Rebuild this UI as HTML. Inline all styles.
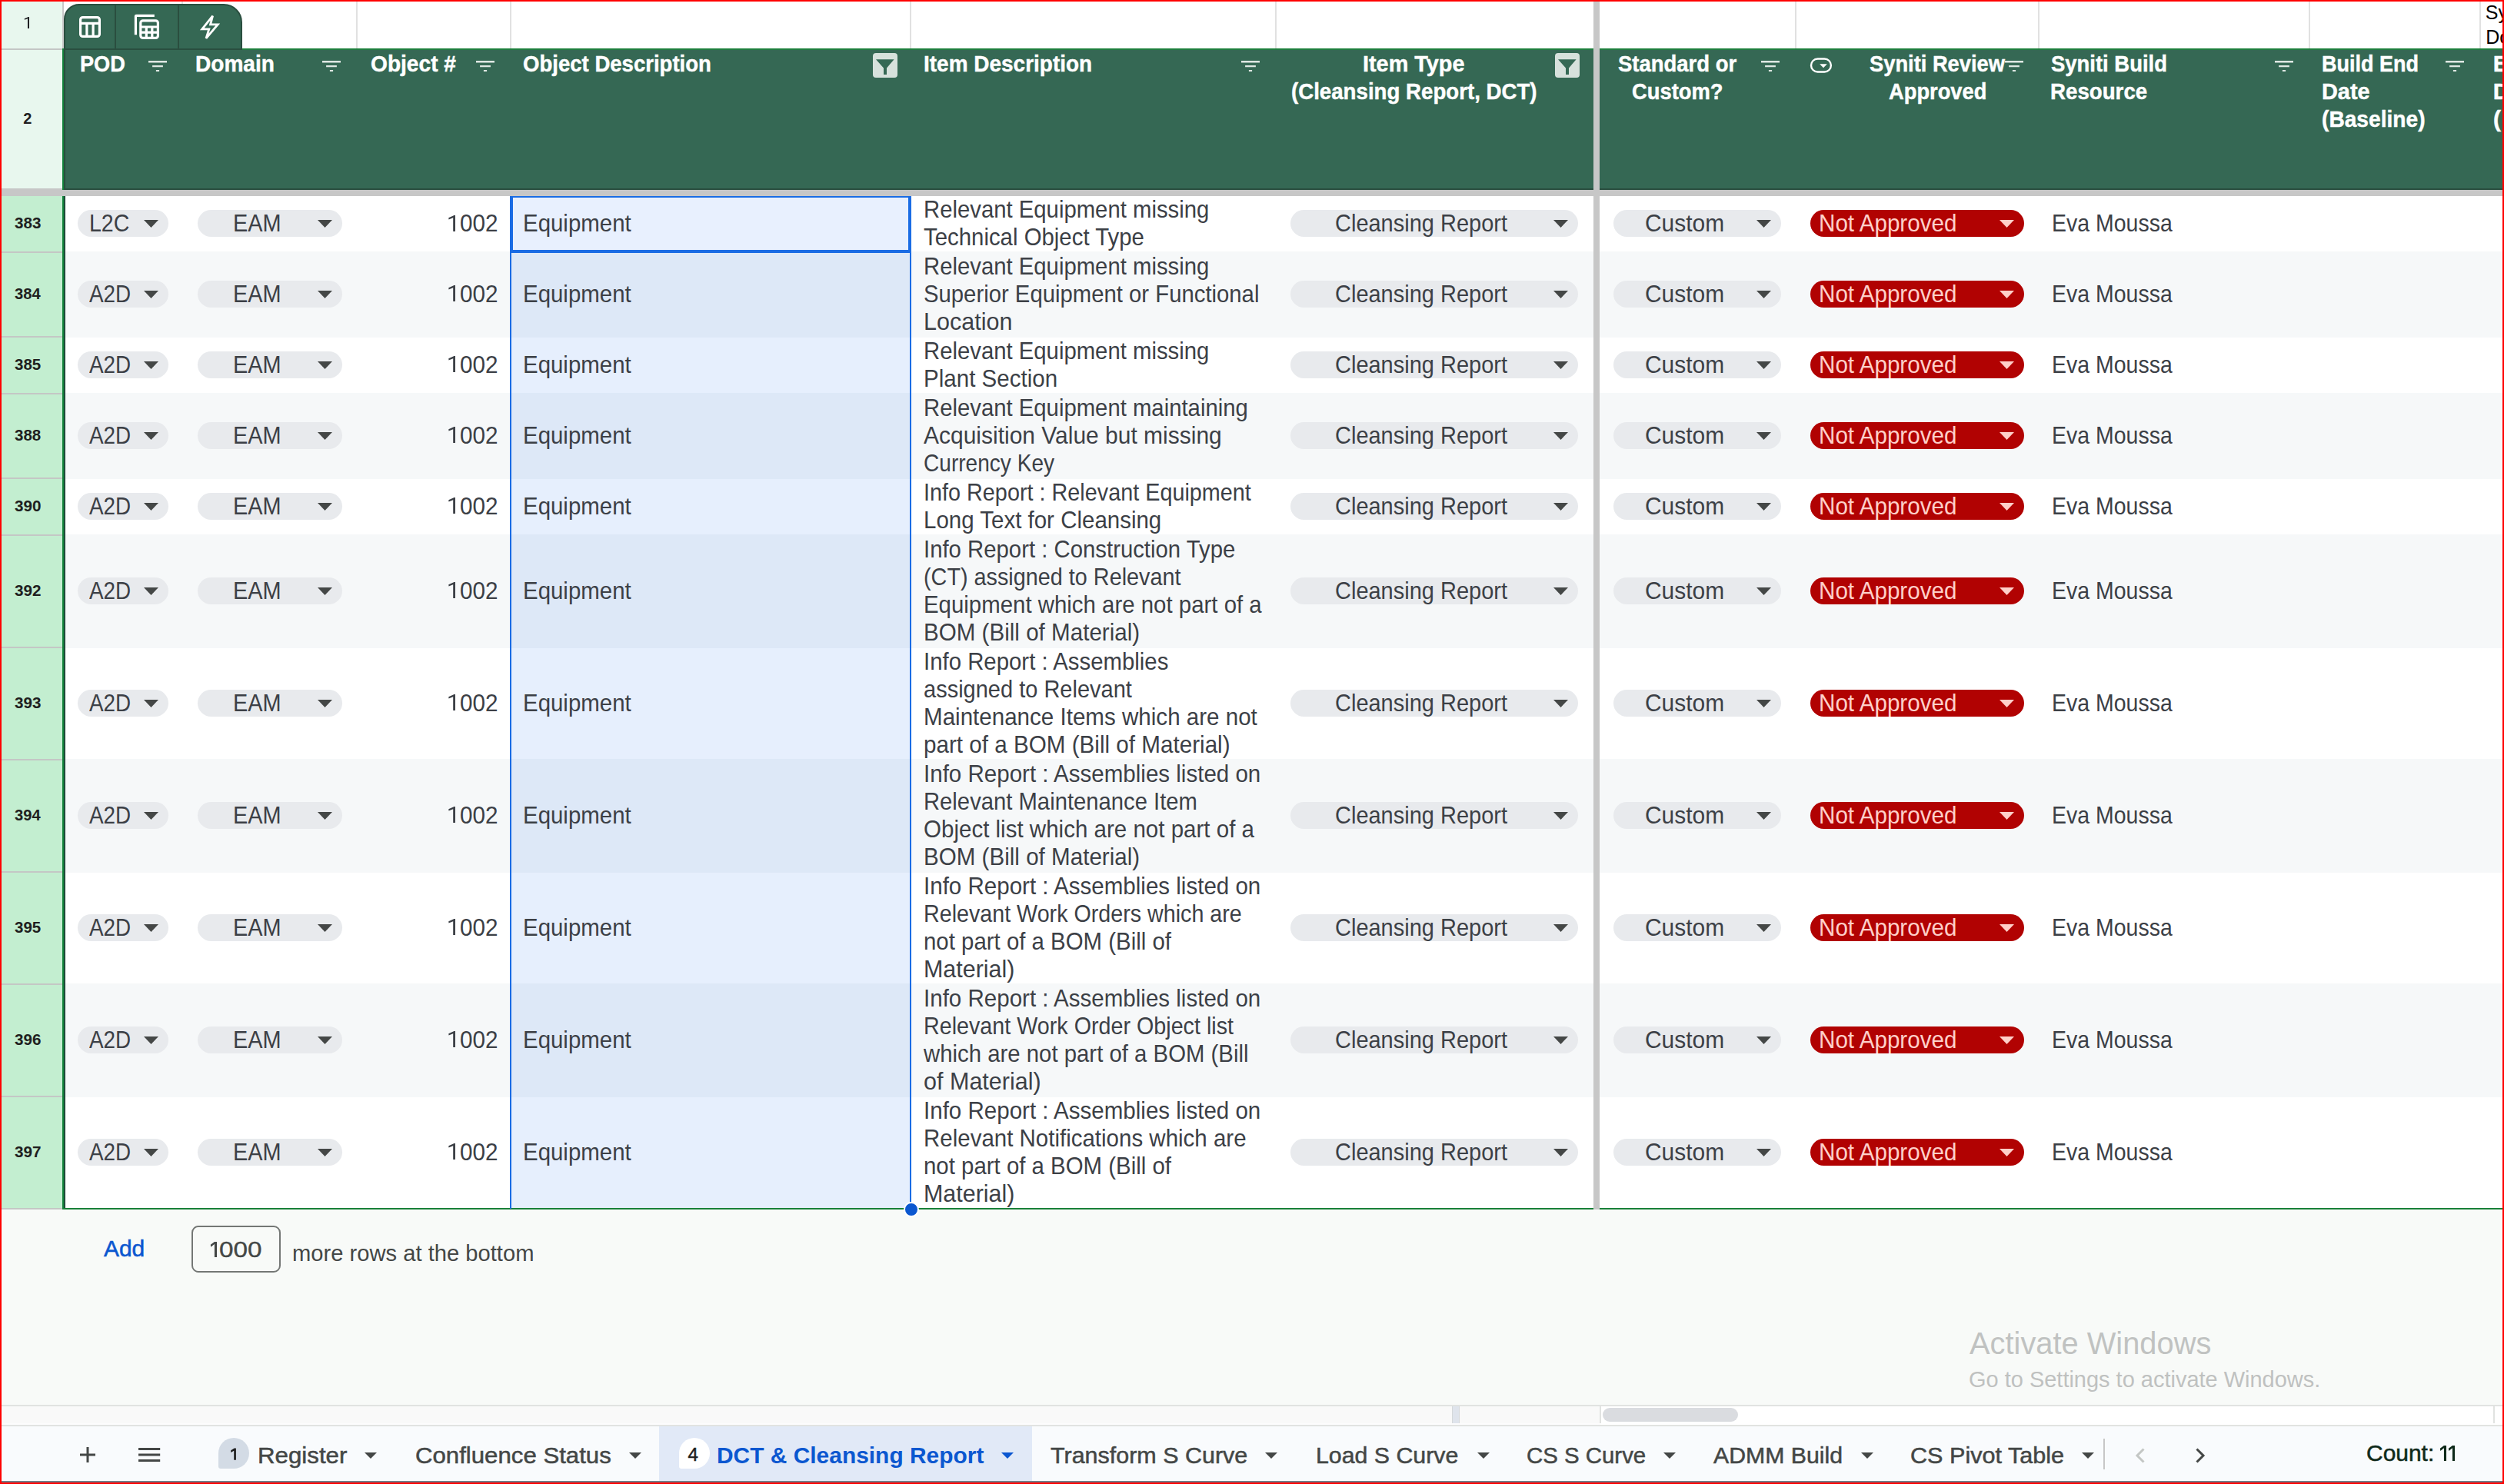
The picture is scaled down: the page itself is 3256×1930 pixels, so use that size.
<!DOCTYPE html>
<html><head><meta charset="utf-8"><title>DCT &amp; Cleansing Report</title><style>
html,body{margin:0;padding:0;}
html{width:3256px;height:1930px;overflow:hidden;}
body{width:3256px;height:1930px;position:relative;overflow:hidden;background:#fff;font-family:"Liberation Sans", sans-serif;}
body>div,body>span,body>svg{position:absolute;}
body>span{white-space:pre;}
</style></head>
<body>
<div style="left:2px;top:2px;width:79px;height:62px;background:#e8f7ee;"></div>
<div style="left:81px;top:2px;width:2px;height:62px;background:#c8c8c8;"></div>
<div style="left:2px;top:63px;width:79px;height:2px;background:#c4c7c5;"></div>
<div style="left:236px;top:2px;width:2px;height:61px;background:#e1e1e1;"></div>
<div style="left:463px;top:2px;width:2px;height:61px;background:#e1e1e1;"></div>
<div style="left:663px;top:2px;width:2px;height:61px;background:#e1e1e1;"></div>
<div style="left:1183px;top:2px;width:2px;height:61px;background:#e1e1e1;"></div>
<div style="left:1658px;top:2px;width:2px;height:61px;background:#e1e1e1;"></div>
<div style="left:2334px;top:2px;width:2px;height:61px;background:#e1e1e1;"></div>
<div style="left:2650px;top:2px;width:2px;height:61px;background:#e1e1e1;"></div>
<div style="left:3002px;top:2px;width:2px;height:61px;background:#e1e1e1;"></div>
<div style="left:3224px;top:2px;width:2px;height:61px;background:#e1e1e1;"></div>
<div style="left:2px;top:65px;width:79px;height:182px;background:#e8f7ee;"></div>
<div style="left:84px;top:63px;width:3172px;height:184px;background:#356854;"></div>
<div style="left:84px;top:63px;width:3172px;height:1px;background:#0e792e;"></div>
<div style="left:84px;top:64px;width:3172px;height:1px;background:#217c42;"></div>
<div style="left:84px;top:245px;width:3172px;height:2px;background:#2a4e3f;"></div>
<div style="left:81px;top:63px;width:2px;height:184px;background:#12803a;"></div>
<div style="left:83px;top:65px;width:2px;height:182px;background:#2a4e3f;"></div>
<div style="left:83px;top:5px;width:232px;height:60px;background:#356854;border:2px solid #2a4e3f;box-sizing:border-box;border-radius:20px 24px 0 0;"></div>
<div style="left:149px;top:7px;width:2px;height:56px;background:#2a4e3f;"></div>
<div style="left:231px;top:7px;width:2px;height:56px;background:#2a4e3f;"></div>
<svg style="left:100px;top:16px" width="200" height="40" viewBox="0 0 200 40" fill="none" stroke="#fff" stroke-width="3.2">
<rect x="4.6" y="6.6" width="24.8" height="24.8" rx="3"/>
<path d="M4.6 14.3H29.4M12.9 14.3V31.4M21.1 14.3V31.4"/>
<path d="M100.8 4.4H77.0a0.6 0.6 0 0 0-0.6 0.6V29.3"/>
<rect x="82.8" y="10.8" width="22.6" height="22.6" rx="3"/>
<path d="M82.8 19.0H105.4M82.8 26.2H105.4M90.3 19.0V33.4M97.8 19.0V33.4"/>
<path d="M176.6 4.6L162.8 21.8H171.8L168.0 33.8L183.2 15.8H173.6Z" stroke-width="2.8" stroke-linejoin="miter"/>
</svg>
<svg style="left:193px;top:79px" width="24" height="15" viewBox="0 0 24 15"><path d="M0 0H24V2.4H0ZM5.1 6H18.9V8.2H5.1ZM9.9 12H14.1V14H9.9Z" fill="#dfe8e3"/></svg>
<svg style="left:419px;top:79px" width="24" height="15" viewBox="0 0 24 15"><path d="M0 0H24V2.4H0ZM5.1 6H18.9V8.2H5.1ZM9.9 12H14.1V14H9.9Z" fill="#dfe8e3"/></svg>
<svg style="left:619px;top:79px" width="24" height="15" viewBox="0 0 24 15"><path d="M0 0H24V2.4H0ZM5.1 6H18.9V8.2H5.1ZM9.9 12H14.1V14H9.9Z" fill="#dfe8e3"/></svg>
<div style="left:1135px;top:69px;width:32px;height:32px;border-radius:4px;background:#d7e1dc;"></div>
<svg style="left:1135px;top:69px" width="32" height="32" viewBox="0 0 32 32"><path d="M4 8.2H27.6L18 19.5V28H14V19.5Z" fill="#356854"/></svg>
<svg style="left:1613.5px;top:79px" width="24" height="15" viewBox="0 0 24 15"><path d="M0 0H24V2.4H0ZM5.1 6H18.9V8.2H5.1ZM9.9 12H14.1V14H9.9Z" fill="#dfe8e3"/></svg>
<div style="left:2022px;top:69px;width:32px;height:32px;border-radius:4px;background:#d7e1dc;"></div>
<svg style="left:2022px;top:69px" width="32" height="32" viewBox="0 0 32 32"><path d="M4 8.2H27.6L18 19.5V28H14V19.5Z" fill="#356854"/></svg>
<svg style="left:2290px;top:79px" width="24" height="15" viewBox="0 0 24 15"><path d="M0 0H24V2.4H0ZM5.1 6H18.9V8.2H5.1ZM9.9 12H14.1V14H9.9Z" fill="#dfe8e3"/></svg>
<svg style="left:2353px;top:74px" width="32" height="22" viewBox="0 0 32 22"><rect x="2" y="2.5" width="25.9" height="17" rx="8.5" fill="none" stroke="#fff" stroke-width="2.4"/><path d="M13.2 9.2H22.8L18 14.3Z" fill="#fff"/></svg>
<svg style="left:2606.6px;top:79px" width="24" height="15" viewBox="0 0 24 15"><path d="M0 0H24V2.4H0ZM5.1 6H18.9V8.2H5.1ZM9.9 12H14.1V14H9.9Z" fill="#dfe8e3"/></svg>
<svg style="left:2958.4px;top:79px" width="24" height="15" viewBox="0 0 24 15"><path d="M0 0H24V2.4H0ZM5.1 6H18.9V8.2H5.1ZM9.9 12H14.1V14H9.9Z" fill="#dfe8e3"/></svg>
<svg style="left:3180px;top:79px" width="24" height="15" viewBox="0 0 24 15"><path d="M0 0H24V2.4H0ZM5.1 6H18.9V8.2H5.1ZM9.9 12H14.1V14H9.9Z" fill="#dfe8e3"/></svg>
<svg style="left:26.00px;top:12.90px" width="14" height="26" viewBox="0 0 14 26"><path d="M9.98 24.00L9.98 11.26L5.88 12.77L5.74 11.18L10.92 8.95L12.00 8.95L12.00 24.00Z" fill="#202124"/></svg>
<div style="left:2px;top:247px;width:3254px;height:8px;background:#c7c7c7;"></div>
<div style="left:2px;top:245px;width:79px;height:2px;background:#c7c7c7;"></div>
<div style="left:2px;top:255px;width:79px;height:73px;background:#c3eed0;"></div>
<div style="left:664px;top:256px;width:520px;height:71px;background:#e8f0fe;"></div>
<div style="left:101px;top:273px;width:118px;height:35px;border-radius:17.5px;background:#e8eaed;"></div>
<svg style="left:187px;top:285.5px" width="19" height="10" viewBox="0 0 19 10"><path d="M0 0H19L9.5 10Z" fill="#444746"/></svg>
<div style="left:257px;top:273px;width:188px;height:35px;border-radius:17.5px;background:#e8eaed;"></div>
<svg style="left:413px;top:285.5px" width="19" height="10" viewBox="0 0 19 10"><path d="M0 0H19L9.5 10Z" fill="#444746"/></svg>
<svg style="left:579.50px;top:276.90px" width="14" height="26" viewBox="0 0 14 26"><path d="M9.20 24.00L9.20 6.30L3.50 8.40L3.30 6.20L10.50 3.10L12.00 3.10L12.00 24.00Z" fill="#3c4046"/></svg>
<div style="left:1678px;top:273px;width:374px;height:35px;border-radius:17.5px;background:#e8eaed;"></div>
<svg style="left:2020px;top:285.5px" width="19" height="10" viewBox="0 0 19 10"><path d="M0 0H19L9.5 10Z" fill="#444746"/></svg>
<div style="left:2098px;top:273px;width:218px;height:35px;border-radius:17.5px;background:#e8eaed;"></div>
<svg style="left:2284px;top:285.5px" width="19" height="10" viewBox="0 0 19 10"><path d="M0 0H19L9.5 10Z" fill="#444746"/></svg>
<div style="left:2354px;top:273px;width:278px;height:35px;border-radius:17.5px;background:#b10202;"></div>
<svg style="left:2600px;top:285.5px" width="19" height="10" viewBox="0 0 19 10"><path d="M0 0H19L9.5 10Z" fill="#ffcfc9"/></svg>
<div style="left:2px;top:328px;width:79px;height:110px;background:#c3eed0;"></div>
<div style="left:2px;top:327px;width:79px;height:2px;background:#c4c7c5;"></div>
<div style="left:85px;top:327px;width:1987px;height:112px;background:#f6f8f9;"></div>
<div style="left:2080px;top:327px;width:1176px;height:112px;background:#f6f8f9;"></div>
<div style="left:664px;top:327px;width:520px;height:112px;background:#dde8f7;"></div>
<div style="left:101px;top:365px;width:118px;height:35px;border-radius:17.5px;background:#e8eaed;"></div>
<svg style="left:187px;top:377.5px" width="19" height="10" viewBox="0 0 19 10"><path d="M0 0H19L9.5 10Z" fill="#444746"/></svg>
<div style="left:257px;top:365px;width:188px;height:35px;border-radius:17.5px;background:#e8eaed;"></div>
<svg style="left:413px;top:377.5px" width="19" height="10" viewBox="0 0 19 10"><path d="M0 0H19L9.5 10Z" fill="#444746"/></svg>
<svg style="left:579.50px;top:368.40px" width="14" height="26" viewBox="0 0 14 26"><path d="M9.20 24.00L9.20 6.30L3.50 8.40L3.30 6.20L10.50 3.10L12.00 3.10L12.00 24.00Z" fill="#3c4046"/></svg>
<div style="left:1678px;top:365px;width:374px;height:35px;border-radius:17.5px;background:#e8eaed;"></div>
<svg style="left:2020px;top:377.5px" width="19" height="10" viewBox="0 0 19 10"><path d="M0 0H19L9.5 10Z" fill="#444746"/></svg>
<div style="left:2098px;top:365px;width:218px;height:35px;border-radius:17.5px;background:#e8eaed;"></div>
<svg style="left:2284px;top:377.5px" width="19" height="10" viewBox="0 0 19 10"><path d="M0 0H19L9.5 10Z" fill="#444746"/></svg>
<div style="left:2354px;top:365px;width:278px;height:35px;border-radius:17.5px;background:#b10202;"></div>
<svg style="left:2600px;top:377.5px" width="19" height="10" viewBox="0 0 19 10"><path d="M0 0H19L9.5 10Z" fill="#ffcfc9"/></svg>
<div style="left:2px;top:438px;width:79px;height:74px;background:#c3eed0;"></div>
<div style="left:2px;top:437px;width:79px;height:2px;background:#c4c7c5;"></div>
<div style="left:664px;top:439px;width:520px;height:72px;background:#e6effd;"></div>
<div style="left:101px;top:457px;width:118px;height:35px;border-radius:17.5px;background:#e8eaed;"></div>
<svg style="left:187px;top:469.5px" width="19" height="10" viewBox="0 0 19 10"><path d="M0 0H19L9.5 10Z" fill="#444746"/></svg>
<div style="left:257px;top:457px;width:188px;height:35px;border-radius:17.5px;background:#e8eaed;"></div>
<svg style="left:413px;top:469.5px" width="19" height="10" viewBox="0 0 19 10"><path d="M0 0H19L9.5 10Z" fill="#444746"/></svg>
<svg style="left:579.50px;top:460.40px" width="14" height="26" viewBox="0 0 14 26"><path d="M9.20 24.00L9.20 6.30L3.50 8.40L3.30 6.20L10.50 3.10L12.00 3.10L12.00 24.00Z" fill="#3c4046"/></svg>
<div style="left:1678px;top:457px;width:374px;height:35px;border-radius:17.5px;background:#e8eaed;"></div>
<svg style="left:2020px;top:469.5px" width="19" height="10" viewBox="0 0 19 10"><path d="M0 0H19L9.5 10Z" fill="#444746"/></svg>
<div style="left:2098px;top:457px;width:218px;height:35px;border-radius:17.5px;background:#e8eaed;"></div>
<svg style="left:2284px;top:469.5px" width="19" height="10" viewBox="0 0 19 10"><path d="M0 0H19L9.5 10Z" fill="#444746"/></svg>
<div style="left:2354px;top:457px;width:278px;height:35px;border-radius:17.5px;background:#b10202;"></div>
<svg style="left:2600px;top:469.5px" width="19" height="10" viewBox="0 0 19 10"><path d="M0 0H19L9.5 10Z" fill="#ffcfc9"/></svg>
<div style="left:2px;top:512px;width:79px;height:110px;background:#c3eed0;"></div>
<div style="left:2px;top:511px;width:79px;height:2px;background:#c4c7c5;"></div>
<div style="left:85px;top:511px;width:1987px;height:112px;background:#f6f8f9;"></div>
<div style="left:2080px;top:511px;width:1176px;height:112px;background:#f6f8f9;"></div>
<div style="left:664px;top:511px;width:520px;height:112px;background:#dde8f7;"></div>
<div style="left:101px;top:549px;width:118px;height:35px;border-radius:17.5px;background:#e8eaed;"></div>
<svg style="left:187px;top:561.5px" width="19" height="10" viewBox="0 0 19 10"><path d="M0 0H19L9.5 10Z" fill="#444746"/></svg>
<div style="left:257px;top:549px;width:188px;height:35px;border-radius:17.5px;background:#e8eaed;"></div>
<svg style="left:413px;top:561.5px" width="19" height="10" viewBox="0 0 19 10"><path d="M0 0H19L9.5 10Z" fill="#444746"/></svg>
<svg style="left:579.50px;top:552.40px" width="14" height="26" viewBox="0 0 14 26"><path d="M9.20 24.00L9.20 6.30L3.50 8.40L3.30 6.20L10.50 3.10L12.00 3.10L12.00 24.00Z" fill="#3c4046"/></svg>
<div style="left:1678px;top:549px;width:374px;height:35px;border-radius:17.5px;background:#e8eaed;"></div>
<svg style="left:2020px;top:561.5px" width="19" height="10" viewBox="0 0 19 10"><path d="M0 0H19L9.5 10Z" fill="#444746"/></svg>
<div style="left:2098px;top:549px;width:218px;height:35px;border-radius:17.5px;background:#e8eaed;"></div>
<svg style="left:2284px;top:561.5px" width="19" height="10" viewBox="0 0 19 10"><path d="M0 0H19L9.5 10Z" fill="#444746"/></svg>
<div style="left:2354px;top:549px;width:278px;height:35px;border-radius:17.5px;background:#b10202;"></div>
<svg style="left:2600px;top:561.5px" width="19" height="10" viewBox="0 0 19 10"><path d="M0 0H19L9.5 10Z" fill="#ffcfc9"/></svg>
<div style="left:2px;top:622px;width:79px;height:74px;background:#c3eed0;"></div>
<div style="left:2px;top:621px;width:79px;height:2px;background:#c4c7c5;"></div>
<div style="left:664px;top:623px;width:520px;height:72px;background:#e6effd;"></div>
<div style="left:101px;top:641px;width:118px;height:35px;border-radius:17.5px;background:#e8eaed;"></div>
<svg style="left:187px;top:653.5px" width="19" height="10" viewBox="0 0 19 10"><path d="M0 0H19L9.5 10Z" fill="#444746"/></svg>
<div style="left:257px;top:641px;width:188px;height:35px;border-radius:17.5px;background:#e8eaed;"></div>
<svg style="left:413px;top:653.5px" width="19" height="10" viewBox="0 0 19 10"><path d="M0 0H19L9.5 10Z" fill="#444746"/></svg>
<svg style="left:579.50px;top:644.40px" width="14" height="26" viewBox="0 0 14 26"><path d="M9.20 24.00L9.20 6.30L3.50 8.40L3.30 6.20L10.50 3.10L12.00 3.10L12.00 24.00Z" fill="#3c4046"/></svg>
<div style="left:1678px;top:641px;width:374px;height:35px;border-radius:17.5px;background:#e8eaed;"></div>
<svg style="left:2020px;top:653.5px" width="19" height="10" viewBox="0 0 19 10"><path d="M0 0H19L9.5 10Z" fill="#444746"/></svg>
<div style="left:2098px;top:641px;width:218px;height:35px;border-radius:17.5px;background:#e8eaed;"></div>
<svg style="left:2284px;top:653.5px" width="19" height="10" viewBox="0 0 19 10"><path d="M0 0H19L9.5 10Z" fill="#444746"/></svg>
<div style="left:2354px;top:641px;width:278px;height:35px;border-radius:17.5px;background:#b10202;"></div>
<svg style="left:2600px;top:653.5px" width="19" height="10" viewBox="0 0 19 10"><path d="M0 0H19L9.5 10Z" fill="#ffcfc9"/></svg>
<div style="left:2px;top:696px;width:79px;height:146px;background:#c3eed0;"></div>
<div style="left:2px;top:695px;width:79px;height:2px;background:#c4c7c5;"></div>
<div style="left:85px;top:695px;width:1987px;height:148px;background:#f6f8f9;"></div>
<div style="left:2080px;top:695px;width:1176px;height:148px;background:#f6f8f9;"></div>
<div style="left:664px;top:695px;width:520px;height:148px;background:#dde8f7;"></div>
<div style="left:101px;top:751px;width:118px;height:35px;border-radius:17.5px;background:#e8eaed;"></div>
<svg style="left:187px;top:763.5px" width="19" height="10" viewBox="0 0 19 10"><path d="M0 0H19L9.5 10Z" fill="#444746"/></svg>
<div style="left:257px;top:751px;width:188px;height:35px;border-radius:17.5px;background:#e8eaed;"></div>
<svg style="left:413px;top:763.5px" width="19" height="10" viewBox="0 0 19 10"><path d="M0 0H19L9.5 10Z" fill="#444746"/></svg>
<svg style="left:579.50px;top:754.40px" width="14" height="26" viewBox="0 0 14 26"><path d="M9.20 24.00L9.20 6.30L3.50 8.40L3.30 6.20L10.50 3.10L12.00 3.10L12.00 24.00Z" fill="#3c4046"/></svg>
<div style="left:1678px;top:751px;width:374px;height:35px;border-radius:17.5px;background:#e8eaed;"></div>
<svg style="left:2020px;top:763.5px" width="19" height="10" viewBox="0 0 19 10"><path d="M0 0H19L9.5 10Z" fill="#444746"/></svg>
<div style="left:2098px;top:751px;width:218px;height:35px;border-radius:17.5px;background:#e8eaed;"></div>
<svg style="left:2284px;top:763.5px" width="19" height="10" viewBox="0 0 19 10"><path d="M0 0H19L9.5 10Z" fill="#444746"/></svg>
<div style="left:2354px;top:751px;width:278px;height:35px;border-radius:17.5px;background:#b10202;"></div>
<svg style="left:2600px;top:763.5px" width="19" height="10" viewBox="0 0 19 10"><path d="M0 0H19L9.5 10Z" fill="#ffcfc9"/></svg>
<div style="left:2px;top:842px;width:79px;height:146px;background:#c3eed0;"></div>
<div style="left:2px;top:841px;width:79px;height:2px;background:#c4c7c5;"></div>
<div style="left:664px;top:843px;width:520px;height:144px;background:#e6effd;"></div>
<div style="left:101px;top:897px;width:118px;height:35px;border-radius:17.5px;background:#e8eaed;"></div>
<svg style="left:187px;top:909.5px" width="19" height="10" viewBox="0 0 19 10"><path d="M0 0H19L9.5 10Z" fill="#444746"/></svg>
<div style="left:257px;top:897px;width:188px;height:35px;border-radius:17.5px;background:#e8eaed;"></div>
<svg style="left:413px;top:909.5px" width="19" height="10" viewBox="0 0 19 10"><path d="M0 0H19L9.5 10Z" fill="#444746"/></svg>
<svg style="left:579.50px;top:900.40px" width="14" height="26" viewBox="0 0 14 26"><path d="M9.20 24.00L9.20 6.30L3.50 8.40L3.30 6.20L10.50 3.10L12.00 3.10L12.00 24.00Z" fill="#3c4046"/></svg>
<div style="left:1678px;top:897px;width:374px;height:35px;border-radius:17.5px;background:#e8eaed;"></div>
<svg style="left:2020px;top:909.5px" width="19" height="10" viewBox="0 0 19 10"><path d="M0 0H19L9.5 10Z" fill="#444746"/></svg>
<div style="left:2098px;top:897px;width:218px;height:35px;border-radius:17.5px;background:#e8eaed;"></div>
<svg style="left:2284px;top:909.5px" width="19" height="10" viewBox="0 0 19 10"><path d="M0 0H19L9.5 10Z" fill="#444746"/></svg>
<div style="left:2354px;top:897px;width:278px;height:35px;border-radius:17.5px;background:#b10202;"></div>
<svg style="left:2600px;top:909.5px" width="19" height="10" viewBox="0 0 19 10"><path d="M0 0H19L9.5 10Z" fill="#ffcfc9"/></svg>
<div style="left:2px;top:988px;width:79px;height:146px;background:#c3eed0;"></div>
<div style="left:2px;top:987px;width:79px;height:2px;background:#c4c7c5;"></div>
<div style="left:85px;top:987px;width:1987px;height:148px;background:#f6f8f9;"></div>
<div style="left:2080px;top:987px;width:1176px;height:148px;background:#f6f8f9;"></div>
<div style="left:664px;top:987px;width:520px;height:148px;background:#dde8f7;"></div>
<div style="left:101px;top:1043px;width:118px;height:35px;border-radius:17.5px;background:#e8eaed;"></div>
<svg style="left:187px;top:1055.5px" width="19" height="10" viewBox="0 0 19 10"><path d="M0 0H19L9.5 10Z" fill="#444746"/></svg>
<div style="left:257px;top:1043px;width:188px;height:35px;border-radius:17.5px;background:#e8eaed;"></div>
<svg style="left:413px;top:1055.5px" width="19" height="10" viewBox="0 0 19 10"><path d="M0 0H19L9.5 10Z" fill="#444746"/></svg>
<svg style="left:579.50px;top:1046.40px" width="14" height="26" viewBox="0 0 14 26"><path d="M9.20 24.00L9.20 6.30L3.50 8.40L3.30 6.20L10.50 3.10L12.00 3.10L12.00 24.00Z" fill="#3c4046"/></svg>
<div style="left:1678px;top:1043px;width:374px;height:35px;border-radius:17.5px;background:#e8eaed;"></div>
<svg style="left:2020px;top:1055.5px" width="19" height="10" viewBox="0 0 19 10"><path d="M0 0H19L9.5 10Z" fill="#444746"/></svg>
<div style="left:2098px;top:1043px;width:218px;height:35px;border-radius:17.5px;background:#e8eaed;"></div>
<svg style="left:2284px;top:1055.5px" width="19" height="10" viewBox="0 0 19 10"><path d="M0 0H19L9.5 10Z" fill="#444746"/></svg>
<div style="left:2354px;top:1043px;width:278px;height:35px;border-radius:17.5px;background:#b10202;"></div>
<svg style="left:2600px;top:1055.5px" width="19" height="10" viewBox="0 0 19 10"><path d="M0 0H19L9.5 10Z" fill="#ffcfc9"/></svg>
<div style="left:2px;top:1134px;width:79px;height:146px;background:#c3eed0;"></div>
<div style="left:2px;top:1133px;width:79px;height:2px;background:#c4c7c5;"></div>
<div style="left:664px;top:1135px;width:520px;height:144px;background:#e6effd;"></div>
<div style="left:101px;top:1189px;width:118px;height:35px;border-radius:17.5px;background:#e8eaed;"></div>
<svg style="left:187px;top:1201.5px" width="19" height="10" viewBox="0 0 19 10"><path d="M0 0H19L9.5 10Z" fill="#444746"/></svg>
<div style="left:257px;top:1189px;width:188px;height:35px;border-radius:17.5px;background:#e8eaed;"></div>
<svg style="left:413px;top:1201.5px" width="19" height="10" viewBox="0 0 19 10"><path d="M0 0H19L9.5 10Z" fill="#444746"/></svg>
<svg style="left:579.50px;top:1192.40px" width="14" height="26" viewBox="0 0 14 26"><path d="M9.20 24.00L9.20 6.30L3.50 8.40L3.30 6.20L10.50 3.10L12.00 3.10L12.00 24.00Z" fill="#3c4046"/></svg>
<div style="left:1678px;top:1189px;width:374px;height:35px;border-radius:17.5px;background:#e8eaed;"></div>
<svg style="left:2020px;top:1201.5px" width="19" height="10" viewBox="0 0 19 10"><path d="M0 0H19L9.5 10Z" fill="#444746"/></svg>
<div style="left:2098px;top:1189px;width:218px;height:35px;border-radius:17.5px;background:#e8eaed;"></div>
<svg style="left:2284px;top:1201.5px" width="19" height="10" viewBox="0 0 19 10"><path d="M0 0H19L9.5 10Z" fill="#444746"/></svg>
<div style="left:2354px;top:1189px;width:278px;height:35px;border-radius:17.5px;background:#b10202;"></div>
<svg style="left:2600px;top:1201.5px" width="19" height="10" viewBox="0 0 19 10"><path d="M0 0H19L9.5 10Z" fill="#ffcfc9"/></svg>
<div style="left:2px;top:1280px;width:79px;height:146px;background:#c3eed0;"></div>
<div style="left:2px;top:1279px;width:79px;height:2px;background:#c4c7c5;"></div>
<div style="left:85px;top:1279px;width:1987px;height:148px;background:#f6f8f9;"></div>
<div style="left:2080px;top:1279px;width:1176px;height:148px;background:#f6f8f9;"></div>
<div style="left:664px;top:1279px;width:520px;height:148px;background:#dde8f7;"></div>
<div style="left:101px;top:1335px;width:118px;height:35px;border-radius:17.5px;background:#e8eaed;"></div>
<svg style="left:187px;top:1347.5px" width="19" height="10" viewBox="0 0 19 10"><path d="M0 0H19L9.5 10Z" fill="#444746"/></svg>
<div style="left:257px;top:1335px;width:188px;height:35px;border-radius:17.5px;background:#e8eaed;"></div>
<svg style="left:413px;top:1347.5px" width="19" height="10" viewBox="0 0 19 10"><path d="M0 0H19L9.5 10Z" fill="#444746"/></svg>
<svg style="left:579.50px;top:1338.40px" width="14" height="26" viewBox="0 0 14 26"><path d="M9.20 24.00L9.20 6.30L3.50 8.40L3.30 6.20L10.50 3.10L12.00 3.10L12.00 24.00Z" fill="#3c4046"/></svg>
<div style="left:1678px;top:1335px;width:374px;height:35px;border-radius:17.5px;background:#e8eaed;"></div>
<svg style="left:2020px;top:1347.5px" width="19" height="10" viewBox="0 0 19 10"><path d="M0 0H19L9.5 10Z" fill="#444746"/></svg>
<div style="left:2098px;top:1335px;width:218px;height:35px;border-radius:17.5px;background:#e8eaed;"></div>
<svg style="left:2284px;top:1347.5px" width="19" height="10" viewBox="0 0 19 10"><path d="M0 0H19L9.5 10Z" fill="#444746"/></svg>
<div style="left:2354px;top:1335px;width:278px;height:35px;border-radius:17.5px;background:#b10202;"></div>
<svg style="left:2600px;top:1347.5px" width="19" height="10" viewBox="0 0 19 10"><path d="M0 0H19L9.5 10Z" fill="#ffcfc9"/></svg>
<div style="left:2px;top:1426px;width:79px;height:146px;background:#c3eed0;"></div>
<div style="left:2px;top:1425px;width:79px;height:2px;background:#c4c7c5;"></div>
<div style="left:664px;top:1427px;width:520px;height:144px;background:#e6effd;"></div>
<div style="left:101px;top:1481px;width:118px;height:35px;border-radius:17.5px;background:#e8eaed;"></div>
<svg style="left:187px;top:1493.5px" width="19" height="10" viewBox="0 0 19 10"><path d="M0 0H19L9.5 10Z" fill="#444746"/></svg>
<div style="left:257px;top:1481px;width:188px;height:35px;border-radius:17.5px;background:#e8eaed;"></div>
<svg style="left:413px;top:1493.5px" width="19" height="10" viewBox="0 0 19 10"><path d="M0 0H19L9.5 10Z" fill="#444746"/></svg>
<svg style="left:579.50px;top:1484.40px" width="14" height="26" viewBox="0 0 14 26"><path d="M9.20 24.00L9.20 6.30L3.50 8.40L3.30 6.20L10.50 3.10L12.00 3.10L12.00 24.00Z" fill="#3c4046"/></svg>
<div style="left:1678px;top:1481px;width:374px;height:35px;border-radius:17.5px;background:#e8eaed;"></div>
<svg style="left:2020px;top:1493.5px" width="19" height="10" viewBox="0 0 19 10"><path d="M0 0H19L9.5 10Z" fill="#444746"/></svg>
<div style="left:2098px;top:1481px;width:218px;height:35px;border-radius:17.5px;background:#e8eaed;"></div>
<svg style="left:2284px;top:1493.5px" width="19" height="10" viewBox="0 0 19 10"><path d="M0 0H19L9.5 10Z" fill="#444746"/></svg>
<div style="left:2354px;top:1481px;width:278px;height:35px;border-radius:17.5px;background:#b10202;"></div>
<svg style="left:2600px;top:1493.5px" width="19" height="10" viewBox="0 0 19 10"><path d="M0 0H19L9.5 10Z" fill="#ffcfc9"/></svg>
<div style="left:81px;top:255px;width:2px;height:1317px;background:#13823b;"></div>
<div style="left:83px;top:255px;width:2px;height:1317px;background:#1e4d39;"></div>
<div style="left:2px;top:1573px;width:3254px;height:255px;background:#f8faf8;"></div>
<div style="left:2px;top:1571px;width:79px;height:2px;background:#c4c7c5;"></div>
<div style="left:81px;top:1571px;width:3175px;height:2px;background:#188038;"></div>
<div style="left:2072px;top:2px;width:8px;height:1571px;background:#c7c7c7;"></div>
<div style="left:249px;top:1594.4px;width:116px;height:61px;box-sizing:border-box;border:2px solid #747775;border-radius:9px;background:#f8faf8;"></div>
<svg style="left:270.20px;top:1611.10px" width="14" height="26" viewBox="0 0 14 26"><path d="M8.90 24.00L8.90 7.10L4.20 10.80L3.80 7.70L8.90 3.90L12.00 3.90L12.00 24.00Z" fill="#444746"/></svg>
<div style="left:2px;top:1827px;width:3254px;height:2px;background:#e1e3e1;"></div>
<div style="left:2px;top:1829px;width:2079px;height:22px;background:#f9f9f9;"></div>
<div style="left:2px;top:1851px;width:2079px;height:2px;background:#fcfcfd;"></div>
<div style="left:2081px;top:1829px;width:1175px;height:24px;background:#ffffff;"></div>
<div style="left:1888px;top:1829px;width:10px;height:22px;background:#dfe4ec;"></div>
<div style="left:1888px;top:1829px;width:1px;height:22px;background:#d5d8da;"></div>
<div style="left:1897px;top:1829px;width:1px;height:22px;background:#d5d8da;"></div>
<div style="left:2080px;top:1829px;width:2px;height:22px;background:#e1e3e1;"></div>
<div style="left:3242px;top:1829px;width:2px;height:22px;background:#e1e3e1;"></div>
<div style="left:2084px;top:1831px;width:176px;height:18px;border-radius:9px;background:#dadce0;"></div>
<div style="left:2px;top:1853px;width:3254px;height:2px;background:#e1e3e1;"></div>
<div style="left:2px;top:1855px;width:3254px;height:72px;background:#f9fbfd;"></div>
<div style="left:857px;top:1855px;width:485px;height:72px;background:#e1e9f7;"></div>
<svg style="left:104px;top:1882px" width="20" height="20" viewBox="0 0 20 20"><path d="M8.5 0H11.5V8.5H20V11.5H11.5V20H8.5V11.5H0V8.5H8.5Z" fill="#444746"/></svg>
<svg style="left:180px;top:1882px" width="29" height="21" viewBox="0 0 29 21"><path d="M0 1H28.2V4H0ZM0 8.4H28.2V11.4H0ZM0 15.9H28.2V18.9H0Z" fill="#444746"/></svg>
<div style="left:284px;top:1870px;width:40px;height:40px;border-radius:20px 20px 20px 3px;background:#d3dbe5;"></div>
<svg style="left:296px;top:1880px" width="16" height="22" viewBox="0 0 16 22"><path d="M4.2 6.3L8.6 3.5H10.9V18.8H8.2V6.7L4.2 9Z" fill="#1f1f1f"/></svg>
<svg style="left:474px;top:1889px" width="16" height="8" viewBox="0 0 16 8"><path d="M0 0H16L8 8Z" fill="#444746"/></svg>
<svg style="left:817.5px;top:1889px" width="16" height="8" viewBox="0 0 16 8"><path d="M0 0H16L8 8Z" fill="#444746"/></svg>
<div style="left:883px;top:1870px;width:40px;height:40px;border-radius:20px 20px 20px 3px;background:#fff;"></div>
<svg style="left:1302px;top:1889px" width="16" height="8" viewBox="0 0 16 8"><path d="M0 0H16L8 8Z" fill="#0b57d0"/></svg>
<svg style="left:1645px;top:1889px" width="16" height="8" viewBox="0 0 16 8"><path d="M0 0H16L8 8Z" fill="#444746"/></svg>
<svg style="left:1920.5px;top:1889px" width="16" height="8" viewBox="0 0 16 8"><path d="M0 0H16L8 8Z" fill="#444746"/></svg>
<svg style="left:2163px;top:1889px" width="16" height="8" viewBox="0 0 16 8"><path d="M0 0H16L8 8Z" fill="#444746"/></svg>
<svg style="left:2419.5px;top:1889px" width="16" height="8" viewBox="0 0 16 8"><path d="M0 0H16L8 8Z" fill="#444746"/></svg>
<svg style="left:2706.5px;top:1889px" width="16" height="8" viewBox="0 0 16 8"><path d="M0 0H16L8 8Z" fill="#444746"/></svg>
<div style="left:2735px;top:1871px;width:2px;height:40px;background:#c7c7c7;"></div>
<svg style="left:2774px;top:1881px" width="18" height="24" viewBox="0 0 18 24"><path d="M13.5 3.5L5 12L13.5 20.5" fill="none" stroke="#c4c7c5" stroke-width="3"/></svg>
<svg style="left:2852px;top:1881px" width="18" height="24" viewBox="0 0 18 24"><path d="M4.5 3.5L13 12L4.5 20.5" fill="none" stroke="#444746" stroke-width="3"/></svg>
<svg style="left:3168.90px;top:1875.90px" width="14" height="26" viewBox="0 0 14 26"><path d="M8.93 24.00L8.93 7.27L4.28 10.93L3.88 7.86L8.93 4.10L12.00 4.10L12.00 24.00Z" fill="#0f2a1a"/></svg>
<svg style="left:3180.30px;top:1875.90px" width="14" height="26" viewBox="0 0 14 26"><path d="M8.93 24.00L8.93 7.27L4.28 10.93L3.88 7.86L8.93 4.10L12.00 4.10L12.00 24.00Z" fill="#0f2a1a"/></svg>
<div style="left:2px;top:1926px;width:3254px;height:2px;background:#717d87;"></div>
<span style="left:104.19px;top:64.67px;font-size:29.8px;line-height:36px;color:#ffffff;font-weight:700;transform:scaleX(0.9114);transform-origin:0 0;-webkit-text-stroke:0.45px #fff;">POD</span>
<span style="left:253.73px;top:64.67px;font-size:29.8px;line-height:36px;color:#ffffff;font-weight:700;transform:scaleX(0.9417);transform-origin:0 0;-webkit-text-stroke:0.45px #fff;">Domain</span>
<span style="left:482.26px;top:64.67px;font-size:29.8px;line-height:36px;color:#ffffff;font-weight:700;transform:scaleX(0.9439);transform-origin:0 0;-webkit-text-stroke:0.45px #fff;">Object #</span>
<span style="left:680.38px;top:64.67px;font-size:29.8px;line-height:36px;color:#ffffff;font-weight:700;transform:scaleX(0.9245);transform-origin:0 0;-webkit-text-stroke:0.45px #fff;">Object Description</span>
<span style="left:1200.54px;top:64.67px;font-size:29.8px;line-height:36px;color:#ffffff;font-weight:700;transform:scaleX(0.9389);transform-origin:0 0;-webkit-text-stroke:0.45px #fff;">Item Description</span>
<span style="left:1772.29px;top:64.67px;font-size:29.8px;line-height:36px;color:#ffffff;font-weight:700;transform:scaleX(0.9679);transform-origin:0 0;-webkit-text-stroke:0.45px #fff;">Item Type</span>
<span style="left:1678.83px;top:100.67px;font-size:29.8px;line-height:36px;color:#ffffff;font-weight:700;transform:scaleX(0.9280);transform-origin:0 0;-webkit-text-stroke:0.45px #fff;">(Cleansing Report, DCT)</span>
<span style="left:2103.72px;top:64.67px;font-size:29.8px;line-height:36px;color:#ffffff;font-weight:700;transform:scaleX(0.9221);transform-origin:0 0;-webkit-text-stroke:0.45px #fff;">Standard or</span>
<span style="left:2121.98px;top:100.67px;font-size:29.8px;line-height:36px;color:#ffffff;font-weight:700;transform:scaleX(0.9177);transform-origin:0 0;-webkit-text-stroke:0.45px #fff;">Custom?</span>
<span style="left:2430.82px;top:64.67px;font-size:29.8px;line-height:36px;color:#ffffff;font-weight:700;transform:scaleX(0.9158);transform-origin:0 0;-webkit-text-stroke:0.45px #fff;">Syniti Review</span>
<span style="left:2456.08px;top:100.67px;font-size:29.8px;line-height:36px;color:#ffffff;font-weight:700;transform:scaleX(0.9159);transform-origin:0 0;-webkit-text-stroke:0.45px #fff;">Approved</span>
<span style="left:2667.32px;top:64.67px;font-size:29.8px;line-height:36px;color:#ffffff;font-weight:700;transform:scaleX(0.9213);transform-origin:0 0;-webkit-text-stroke:0.45px #fff;">Syniti Build</span>
<span style="left:2666.26px;top:100.67px;font-size:29.8px;line-height:36px;color:#ffffff;font-weight:700;transform:scaleX(0.9291);transform-origin:0 0;-webkit-text-stroke:0.45px #fff;">Resource</span>
<span style="left:3018.90px;top:64.67px;font-size:29.8px;line-height:36px;color:#ffffff;font-weight:700;transform:scaleX(0.9061);transform-origin:0 0;-webkit-text-stroke:0.45px #fff;">Build End</span>
<span style="left:3018.79px;top:100.67px;font-size:29.8px;line-height:36px;color:#ffffff;font-weight:700;transform:scaleX(0.9690);transform-origin:0 0;-webkit-text-stroke:0.45px #fff;">Date</span>
<span style="left:3019.31px;top:136.67px;font-size:29.8px;line-height:36px;color:#ffffff;font-weight:700;transform:scaleX(0.9450);transform-origin:0 0;-webkit-text-stroke:0.45px #fff;">(Baseline)</span>
<span style="left:3241.73px;top:64.67px;font-size:29.8px;line-height:36px;color:#ffffff;font-weight:700;-webkit-text-stroke:0.45px #fff;width:14.27px;overflow:hidden;">B</span>
<span style="left:3241.73px;top:100.67px;font-size:29.8px;line-height:36px;color:#ffffff;font-weight:700;-webkit-text-stroke:0.45px #fff;width:14.27px;overflow:hidden;">D</span>
<span style="left:3241.94px;top:136.67px;font-size:29.8px;line-height:36px;color:#ffffff;font-weight:700;-webkit-text-stroke:0.45px #fff;">(</span>
<span style="left:3231.76px;top:0.54px;font-size:25px;line-height:30px;color:#000;width:24.24px;overflow:hidden;">Sy</span>
<span style="left:3232.15px;top:33.24px;font-size:25px;line-height:30px;color:#000;width:23.85px;overflow:hidden;">Do</span>
<span style="left:30.29px;top:142.07px;font-size:20px;line-height:24px;color:#1f1f1f;font-weight:700;">2</span>
<span style="left:18.93px;top:277.10px;font-size:20.5px;line-height:25px;color:#1f1f1f;font-weight:700;transform:scaleX(1.0063);transform-origin:0 0;">383</span>
<span style="left:116.46px;top:272.33px;font-size:30.5px;line-height:37px;color:#3c4046;transform:scaleX(0.9352);transform-origin:0 0;">L2C</span>
<span style="left:303.13px;top:272.33px;font-size:30.5px;line-height:37px;color:#3c4046;transform:scaleX(0.9462);transform-origin:0 0;">EAM</span>
<span style="left:597.84px;top:272.33px;font-size:30.5px;line-height:37px;color:#3c4046;transform:scaleX(0.9738);transform-origin:0 0;">002</span>
<span style="left:679.79px;top:272.33px;font-size:30.5px;line-height:37px;color:#3c4046;transform:scaleX(0.9651);transform-origin:0 0;">Equipment</span>
<span style="left:1200.70px;top:254.33px;font-size:30.5px;line-height:37px;color:#3c4046;transform:scaleX(0.9606);transform-origin:0 0;">Relevant Equipment missing</span>
<span style="left:1200.63px;top:290.33px;font-size:30.5px;line-height:37px;color:#3c4046;transform:scaleX(0.9632);transform-origin:0 0;">Technical Object Type</span>
<span style="left:1735.93px;top:272.33px;font-size:30.5px;line-height:37px;color:#3c4046;transform:scaleX(0.9505);transform-origin:0 0;">Cleansing Report</span>
<span style="left:2138.88px;top:272.33px;font-size:30.5px;line-height:37px;color:#3c4046;transform:scaleX(0.9811);transform-origin:0 0;">Custom</span>
<span style="left:2364.57px;top:272.33px;font-size:30.5px;line-height:37px;color:#ffcfc9;transform:scaleX(0.9707);transform-origin:0 0;">Not Approved</span>
<span style="left:2667.76px;top:272.33px;font-size:30.5px;line-height:37px;color:#3c4046;transform:scaleX(0.9339);transform-origin:0 0;">Eva Moussa</span>
<span style="left:18.94px;top:368.60px;font-size:20.5px;line-height:25px;color:#1f1f1f;font-weight:700;transform:scaleX(0.9874);transform-origin:0 0;">384</span>
<span style="left:116.15px;top:363.83px;font-size:30.5px;line-height:37px;color:#3c4046;transform:scaleX(0.9133);transform-origin:0 0;">A2D</span>
<span style="left:303.13px;top:363.83px;font-size:30.5px;line-height:37px;color:#3c4046;transform:scaleX(0.9462);transform-origin:0 0;">EAM</span>
<span style="left:597.84px;top:363.83px;font-size:30.5px;line-height:37px;color:#3c4046;transform:scaleX(0.9738);transform-origin:0 0;">002</span>
<span style="left:679.79px;top:363.83px;font-size:30.5px;line-height:37px;color:#3c4046;transform:scaleX(0.9651);transform-origin:0 0;">Equipment</span>
<span style="left:1200.70px;top:327.83px;font-size:30.5px;line-height:37px;color:#3c4046;transform:scaleX(0.9606);transform-origin:0 0;">Relevant Equipment missing</span>
<span style="left:1200.65px;top:363.83px;font-size:30.5px;line-height:37px;color:#3c4046;transform:scaleX(0.9605);transform-origin:0 0;">Superior Equipment or Functional</span>
<span style="left:1200.60px;top:399.83px;font-size:30.5px;line-height:37px;color:#3c4046;transform:scaleX(1.0006);transform-origin:0 0;">Location</span>
<span style="left:1735.93px;top:363.83px;font-size:30.5px;line-height:37px;color:#3c4046;transform:scaleX(0.9505);transform-origin:0 0;">Cleansing Report</span>
<span style="left:2138.88px;top:363.83px;font-size:30.5px;line-height:37px;color:#3c4046;transform:scaleX(0.9811);transform-origin:0 0;">Custom</span>
<span style="left:2364.57px;top:363.83px;font-size:30.5px;line-height:37px;color:#ffcfc9;transform:scaleX(0.9707);transform-origin:0 0;">Not Approved</span>
<span style="left:2667.76px;top:363.83px;font-size:30.5px;line-height:37px;color:#3c4046;transform:scaleX(0.9339);transform-origin:0 0;">Eva Moussa</span>
<span style="left:18.93px;top:460.60px;font-size:20.5px;line-height:25px;color:#1f1f1f;font-weight:700;transform:scaleX(1.0011);transform-origin:0 0;">385</span>
<span style="left:116.15px;top:455.83px;font-size:30.5px;line-height:37px;color:#3c4046;transform:scaleX(0.9133);transform-origin:0 0;">A2D</span>
<span style="left:303.13px;top:455.83px;font-size:30.5px;line-height:37px;color:#3c4046;transform:scaleX(0.9462);transform-origin:0 0;">EAM</span>
<span style="left:597.84px;top:455.83px;font-size:30.5px;line-height:37px;color:#3c4046;transform:scaleX(0.9738);transform-origin:0 0;">002</span>
<span style="left:679.79px;top:455.83px;font-size:30.5px;line-height:37px;color:#3c4046;transform:scaleX(0.9651);transform-origin:0 0;">Equipment</span>
<span style="left:1200.70px;top:437.83px;font-size:30.5px;line-height:37px;color:#3c4046;transform:scaleX(0.9606);transform-origin:0 0;">Relevant Equipment missing</span>
<span style="left:1200.68px;top:473.83px;font-size:30.5px;line-height:37px;color:#3c4046;transform:scaleX(0.9689);transform-origin:0 0;">Plant Section</span>
<span style="left:1735.93px;top:455.83px;font-size:30.5px;line-height:37px;color:#3c4046;transform:scaleX(0.9505);transform-origin:0 0;">Cleansing Report</span>
<span style="left:2138.88px;top:455.83px;font-size:30.5px;line-height:37px;color:#3c4046;transform:scaleX(0.9811);transform-origin:0 0;">Custom</span>
<span style="left:2364.57px;top:455.83px;font-size:30.5px;line-height:37px;color:#ffcfc9;transform:scaleX(0.9707);transform-origin:0 0;">Not Approved</span>
<span style="left:2667.76px;top:455.83px;font-size:30.5px;line-height:37px;color:#3c4046;transform:scaleX(0.9339);transform-origin:0 0;">Eva Moussa</span>
<span style="left:18.93px;top:552.60px;font-size:20.5px;line-height:25px;color:#1f1f1f;font-weight:700;transform:scaleX(1.0030);transform-origin:0 0;">388</span>
<span style="left:116.15px;top:547.83px;font-size:30.5px;line-height:37px;color:#3c4046;transform:scaleX(0.9133);transform-origin:0 0;">A2D</span>
<span style="left:303.13px;top:547.83px;font-size:30.5px;line-height:37px;color:#3c4046;transform:scaleX(0.9462);transform-origin:0 0;">EAM</span>
<span style="left:597.84px;top:547.83px;font-size:30.5px;line-height:37px;color:#3c4046;transform:scaleX(0.9738);transform-origin:0 0;">002</span>
<span style="left:679.79px;top:547.83px;font-size:30.5px;line-height:37px;color:#3c4046;transform:scaleX(0.9651);transform-origin:0 0;">Equipment</span>
<span style="left:1200.70px;top:511.83px;font-size:30.5px;line-height:37px;color:#3c4046;transform:scaleX(0.9605);transform-origin:0 0;">Relevant Equipment maintaining</span>
<span style="left:1200.60px;top:547.83px;font-size:30.5px;line-height:37px;color:#3c4046;transform:scaleX(0.9830);transform-origin:0 0;">Acquisition Value but missing</span>
<span style="left:1200.72px;top:583.83px;font-size:30.5px;line-height:37px;color:#3c4046;transform:scaleX(0.9203);transform-origin:0 0;">Currency Key</span>
<span style="left:1735.93px;top:547.83px;font-size:30.5px;line-height:37px;color:#3c4046;transform:scaleX(0.9505);transform-origin:0 0;">Cleansing Report</span>
<span style="left:2138.88px;top:547.83px;font-size:30.5px;line-height:37px;color:#3c4046;transform:scaleX(0.9811);transform-origin:0 0;">Custom</span>
<span style="left:2364.57px;top:547.83px;font-size:30.5px;line-height:37px;color:#ffcfc9;transform:scaleX(0.9707);transform-origin:0 0;">Not Approved</span>
<span style="left:2667.76px;top:547.83px;font-size:30.5px;line-height:37px;color:#3c4046;transform:scaleX(0.9339);transform-origin:0 0;">Eva Moussa</span>
<span style="left:18.93px;top:644.60px;font-size:20.5px;line-height:25px;color:#1f1f1f;font-weight:700;transform:scaleX(1.0094);transform-origin:0 0;">390</span>
<span style="left:116.15px;top:639.83px;font-size:30.5px;line-height:37px;color:#3c4046;transform:scaleX(0.9133);transform-origin:0 0;">A2D</span>
<span style="left:303.13px;top:639.83px;font-size:30.5px;line-height:37px;color:#3c4046;transform:scaleX(0.9462);transform-origin:0 0;">EAM</span>
<span style="left:597.84px;top:639.83px;font-size:30.5px;line-height:37px;color:#3c4046;transform:scaleX(0.9738);transform-origin:0 0;">002</span>
<span style="left:679.79px;top:639.83px;font-size:30.5px;line-height:37px;color:#3c4046;transform:scaleX(0.9651);transform-origin:0 0;">Equipment</span>
<span style="left:1200.76px;top:621.83px;font-size:30.5px;line-height:37px;color:#3c4046;transform:scaleX(0.9443);transform-origin:0 0;">Info Report : Relevant Equipment</span>
<span style="left:1200.68px;top:657.83px;font-size:30.5px;line-height:37px;color:#3c4046;transform:scaleX(0.9668);transform-origin:0 0;">Long Text for Cleansing</span>
<span style="left:1735.93px;top:639.83px;font-size:30.5px;line-height:37px;color:#3c4046;transform:scaleX(0.9505);transform-origin:0 0;">Cleansing Report</span>
<span style="left:2138.88px;top:639.83px;font-size:30.5px;line-height:37px;color:#3c4046;transform:scaleX(0.9811);transform-origin:0 0;">Custom</span>
<span style="left:2364.57px;top:639.83px;font-size:30.5px;line-height:37px;color:#ffcfc9;transform:scaleX(0.9707);transform-origin:0 0;">Not Approved</span>
<span style="left:2667.76px;top:639.83px;font-size:30.5px;line-height:37px;color:#3c4046;transform:scaleX(0.9339);transform-origin:0 0;">Eva Moussa</span>
<span style="left:18.93px;top:754.60px;font-size:20.5px;line-height:25px;color:#1f1f1f;font-weight:700;transform:scaleX(1.0087);transform-origin:0 0;">392</span>
<span style="left:116.15px;top:749.83px;font-size:30.5px;line-height:37px;color:#3c4046;transform:scaleX(0.9133);transform-origin:0 0;">A2D</span>
<span style="left:303.13px;top:749.83px;font-size:30.5px;line-height:37px;color:#3c4046;transform:scaleX(0.9462);transform-origin:0 0;">EAM</span>
<span style="left:597.84px;top:749.83px;font-size:30.5px;line-height:37px;color:#3c4046;transform:scaleX(0.9738);transform-origin:0 0;">002</span>
<span style="left:679.79px;top:749.83px;font-size:30.5px;line-height:37px;color:#3c4046;transform:scaleX(0.9651);transform-origin:0 0;">Equipment</span>
<span style="left:1200.71px;top:695.83px;font-size:30.5px;line-height:37px;color:#3c4046;transform:scaleX(0.9615);transform-origin:0 0;">Info Report : Construction Type</span>
<span style="left:1200.71px;top:731.83px;font-size:30.5px;line-height:37px;color:#3c4046;transform:scaleX(0.9441);transform-origin:0 0;">(CT) assigned to Relevant</span>
<span style="left:1200.69px;top:767.83px;font-size:30.5px;line-height:37px;color:#3c4046;transform:scaleX(0.9641);transform-origin:0 0;">Equipment which are not part of a</span>
<span style="left:1200.67px;top:803.83px;font-size:30.5px;line-height:37px;color:#3c4046;transform:scaleX(0.9702);transform-origin:0 0;">BOM (Bill of Material)</span>
<span style="left:1735.93px;top:749.83px;font-size:30.5px;line-height:37px;color:#3c4046;transform:scaleX(0.9505);transform-origin:0 0;">Cleansing Report</span>
<span style="left:2138.88px;top:749.83px;font-size:30.5px;line-height:37px;color:#3c4046;transform:scaleX(0.9811);transform-origin:0 0;">Custom</span>
<span style="left:2364.57px;top:749.83px;font-size:30.5px;line-height:37px;color:#ffcfc9;transform:scaleX(0.9707);transform-origin:0 0;">Not Approved</span>
<span style="left:2667.76px;top:749.83px;font-size:30.5px;line-height:37px;color:#3c4046;transform:scaleX(0.9339);transform-origin:0 0;">Eva Moussa</span>
<span style="left:18.93px;top:900.60px;font-size:20.5px;line-height:25px;color:#1f1f1f;font-weight:700;transform:scaleX(1.0063);transform-origin:0 0;">393</span>
<span style="left:116.15px;top:895.83px;font-size:30.5px;line-height:37px;color:#3c4046;transform:scaleX(0.9133);transform-origin:0 0;">A2D</span>
<span style="left:303.13px;top:895.83px;font-size:30.5px;line-height:37px;color:#3c4046;transform:scaleX(0.9462);transform-origin:0 0;">EAM</span>
<span style="left:597.84px;top:895.83px;font-size:30.5px;line-height:37px;color:#3c4046;transform:scaleX(0.9738);transform-origin:0 0;">002</span>
<span style="left:679.79px;top:895.83px;font-size:30.5px;line-height:37px;color:#3c4046;transform:scaleX(0.9651);transform-origin:0 0;">Equipment</span>
<span style="left:1200.70px;top:841.83px;font-size:30.5px;line-height:37px;color:#3c4046;transform:scaleX(0.9630);transform-origin:0 0;">Info Report : Assemblies</span>
<span style="left:1200.66px;top:877.83px;font-size:30.5px;line-height:37px;color:#3c4046;transform:scaleX(0.9508);transform-origin:0 0;">assigned to Relevant</span>
<span style="left:1200.68px;top:913.83px;font-size:30.5px;line-height:37px;color:#3c4046;transform:scaleX(0.9693);transform-origin:0 0;">Maintenance Items which are not</span>
<span style="left:1200.66px;top:949.83px;font-size:30.5px;line-height:37px;color:#3c4046;transform:scaleX(0.9717);transform-origin:0 0;">part of a BOM (Bill of Material)</span>
<span style="left:1735.93px;top:895.83px;font-size:30.5px;line-height:37px;color:#3c4046;transform:scaleX(0.9505);transform-origin:0 0;">Cleansing Report</span>
<span style="left:2138.88px;top:895.83px;font-size:30.5px;line-height:37px;color:#3c4046;transform:scaleX(0.9811);transform-origin:0 0;">Custom</span>
<span style="left:2364.57px;top:895.83px;font-size:30.5px;line-height:37px;color:#ffcfc9;transform:scaleX(0.9707);transform-origin:0 0;">Not Approved</span>
<span style="left:2667.76px;top:895.83px;font-size:30.5px;line-height:37px;color:#3c4046;transform:scaleX(0.9339);transform-origin:0 0;">Eva Moussa</span>
<span style="left:18.94px;top:1046.60px;font-size:20.5px;line-height:25px;color:#1f1f1f;font-weight:700;transform:scaleX(0.9874);transform-origin:0 0;">394</span>
<span style="left:116.15px;top:1041.83px;font-size:30.5px;line-height:37px;color:#3c4046;transform:scaleX(0.9133);transform-origin:0 0;">A2D</span>
<span style="left:303.13px;top:1041.83px;font-size:30.5px;line-height:37px;color:#3c4046;transform:scaleX(0.9462);transform-origin:0 0;">EAM</span>
<span style="left:597.84px;top:1041.83px;font-size:30.5px;line-height:37px;color:#3c4046;transform:scaleX(0.9738);transform-origin:0 0;">002</span>
<span style="left:679.79px;top:1041.83px;font-size:30.5px;line-height:37px;color:#3c4046;transform:scaleX(0.9651);transform-origin:0 0;">Equipment</span>
<span style="left:1200.69px;top:987.83px;font-size:30.5px;line-height:37px;color:#3c4046;transform:scaleX(0.9683);transform-origin:0 0;">Info Report : Assemblies listed on</span>
<span style="left:1200.70px;top:1023.83px;font-size:30.5px;line-height:37px;color:#3c4046;transform:scaleX(0.9586);transform-origin:0 0;">Relevant Maintenance Item</span>
<span style="left:1200.65px;top:1059.83px;font-size:30.5px;line-height:37px;color:#3c4046;transform:scaleX(0.9682);transform-origin:0 0;">Object list which are not part of a</span>
<span style="left:1200.67px;top:1095.83px;font-size:30.5px;line-height:37px;color:#3c4046;transform:scaleX(0.9702);transform-origin:0 0;">BOM (Bill of Material)</span>
<span style="left:1735.93px;top:1041.83px;font-size:30.5px;line-height:37px;color:#3c4046;transform:scaleX(0.9505);transform-origin:0 0;">Cleansing Report</span>
<span style="left:2138.88px;top:1041.83px;font-size:30.5px;line-height:37px;color:#3c4046;transform:scaleX(0.9811);transform-origin:0 0;">Custom</span>
<span style="left:2364.57px;top:1041.83px;font-size:30.5px;line-height:37px;color:#ffcfc9;transform:scaleX(0.9707);transform-origin:0 0;">Not Approved</span>
<span style="left:2667.76px;top:1041.83px;font-size:30.5px;line-height:37px;color:#3c4046;transform:scaleX(0.9339);transform-origin:0 0;">Eva Moussa</span>
<span style="left:18.93px;top:1192.60px;font-size:20.5px;line-height:25px;color:#1f1f1f;font-weight:700;transform:scaleX(1.0011);transform-origin:0 0;">395</span>
<span style="left:116.15px;top:1187.83px;font-size:30.5px;line-height:37px;color:#3c4046;transform:scaleX(0.9133);transform-origin:0 0;">A2D</span>
<span style="left:303.13px;top:1187.83px;font-size:30.5px;line-height:37px;color:#3c4046;transform:scaleX(0.9462);transform-origin:0 0;">EAM</span>
<span style="left:597.84px;top:1187.83px;font-size:30.5px;line-height:37px;color:#3c4046;transform:scaleX(0.9738);transform-origin:0 0;">002</span>
<span style="left:679.79px;top:1187.83px;font-size:30.5px;line-height:37px;color:#3c4046;transform:scaleX(0.9651);transform-origin:0 0;">Equipment</span>
<span style="left:1200.69px;top:1133.83px;font-size:30.5px;line-height:37px;color:#3c4046;transform:scaleX(0.9683);transform-origin:0 0;">Info Report : Assemblies listed on</span>
<span style="left:1200.75px;top:1169.83px;font-size:30.5px;line-height:37px;color:#3c4046;transform:scaleX(0.9400);transform-origin:0 0;">Relevant Work Orders which are</span>
<span style="left:1200.67px;top:1205.83px;font-size:30.5px;line-height:37px;color:#3c4046;transform:scaleX(0.9642);transform-origin:0 0;">not part of a BOM (Bill of</span>
<span style="left:1200.61px;top:1241.83px;font-size:30.5px;line-height:37px;color:#3c4046;transform:scaleX(0.9979);transform-origin:0 0;">Material)</span>
<span style="left:1735.93px;top:1187.83px;font-size:30.5px;line-height:37px;color:#3c4046;transform:scaleX(0.9505);transform-origin:0 0;">Cleansing Report</span>
<span style="left:2138.88px;top:1187.83px;font-size:30.5px;line-height:37px;color:#3c4046;transform:scaleX(0.9811);transform-origin:0 0;">Custom</span>
<span style="left:2364.57px;top:1187.83px;font-size:30.5px;line-height:37px;color:#ffcfc9;transform:scaleX(0.9707);transform-origin:0 0;">Not Approved</span>
<span style="left:2667.76px;top:1187.83px;font-size:30.5px;line-height:37px;color:#3c4046;transform:scaleX(0.9339);transform-origin:0 0;">Eva Moussa</span>
<span style="left:18.93px;top:1338.60px;font-size:20.5px;line-height:25px;color:#1f1f1f;font-weight:700;transform:scaleX(1.0063);transform-origin:0 0;">396</span>
<span style="left:116.15px;top:1333.83px;font-size:30.5px;line-height:37px;color:#3c4046;transform:scaleX(0.9133);transform-origin:0 0;">A2D</span>
<span style="left:303.13px;top:1333.83px;font-size:30.5px;line-height:37px;color:#3c4046;transform:scaleX(0.9462);transform-origin:0 0;">EAM</span>
<span style="left:597.84px;top:1333.83px;font-size:30.5px;line-height:37px;color:#3c4046;transform:scaleX(0.9738);transform-origin:0 0;">002</span>
<span style="left:679.79px;top:1333.83px;font-size:30.5px;line-height:37px;color:#3c4046;transform:scaleX(0.9651);transform-origin:0 0;">Equipment</span>
<span style="left:1200.69px;top:1279.83px;font-size:30.5px;line-height:37px;color:#3c4046;transform:scaleX(0.9683);transform-origin:0 0;">Info Report : Assemblies listed on</span>
<span style="left:1200.75px;top:1315.83px;font-size:30.5px;line-height:37px;color:#3c4046;transform:scaleX(0.9409);transform-origin:0 0;">Relevant Work Order Object list</span>
<span style="left:1200.60px;top:1351.83px;font-size:30.5px;line-height:37px;color:#3c4046;transform:scaleX(0.9623);transform-origin:0 0;">which are not part of a BOM (Bill</span>
<span style="left:1200.60px;top:1387.83px;font-size:30.5px;line-height:37px;color:#3c4046;transform:scaleX(1.0010);transform-origin:0 0;">of Material)</span>
<span style="left:1735.93px;top:1333.83px;font-size:30.5px;line-height:37px;color:#3c4046;transform:scaleX(0.9505);transform-origin:0 0;">Cleansing Report</span>
<span style="left:2138.88px;top:1333.83px;font-size:30.5px;line-height:37px;color:#3c4046;transform:scaleX(0.9811);transform-origin:0 0;">Custom</span>
<span style="left:2364.57px;top:1333.83px;font-size:30.5px;line-height:37px;color:#ffcfc9;transform:scaleX(0.9707);transform-origin:0 0;">Not Approved</span>
<span style="left:2667.76px;top:1333.83px;font-size:30.5px;line-height:37px;color:#3c4046;transform:scaleX(0.9339);transform-origin:0 0;">Eva Moussa</span>
<span style="left:18.92px;top:1484.60px;font-size:20.5px;line-height:25px;color:#1f1f1f;font-weight:700;transform:scaleX(1.0112);transform-origin:0 0;">397</span>
<span style="left:116.15px;top:1479.83px;font-size:30.5px;line-height:37px;color:#3c4046;transform:scaleX(0.9133);transform-origin:0 0;">A2D</span>
<span style="left:303.13px;top:1479.83px;font-size:30.5px;line-height:37px;color:#3c4046;transform:scaleX(0.9462);transform-origin:0 0;">EAM</span>
<span style="left:597.84px;top:1479.83px;font-size:30.5px;line-height:37px;color:#3c4046;transform:scaleX(0.9738);transform-origin:0 0;">002</span>
<span style="left:679.79px;top:1479.83px;font-size:30.5px;line-height:37px;color:#3c4046;transform:scaleX(0.9651);transform-origin:0 0;">Equipment</span>
<span style="left:1200.69px;top:1425.83px;font-size:30.5px;line-height:37px;color:#3c4046;transform:scaleX(0.9683);transform-origin:0 0;">Info Report : Assemblies listed on</span>
<span style="left:1200.68px;top:1461.83px;font-size:30.5px;line-height:37px;color:#3c4046;transform:scaleX(0.9667);transform-origin:0 0;">Relevant Notifications which are</span>
<span style="left:1200.67px;top:1497.83px;font-size:30.5px;line-height:37px;color:#3c4046;transform:scaleX(0.9642);transform-origin:0 0;">not part of a BOM (Bill of</span>
<span style="left:1200.61px;top:1533.83px;font-size:30.5px;line-height:37px;color:#3c4046;transform:scaleX(0.9979);transform-origin:0 0;">Material)</span>
<span style="left:1735.93px;top:1479.83px;font-size:30.5px;line-height:37px;color:#3c4046;transform:scaleX(0.9505);transform-origin:0 0;">Cleansing Report</span>
<span style="left:2138.88px;top:1479.83px;font-size:30.5px;line-height:37px;color:#3c4046;transform:scaleX(0.9811);transform-origin:0 0;">Custom</span>
<span style="left:2364.57px;top:1479.83px;font-size:30.5px;line-height:37px;color:#ffcfc9;transform:scaleX(0.9707);transform-origin:0 0;">Not Approved</span>
<span style="left:2667.76px;top:1479.83px;font-size:30.5px;line-height:37px;color:#3c4046;transform:scaleX(0.9339);transform-origin:0 0;">Eva Moussa</span>
<span style="left:135.03px;top:1607.25px;font-size:29px;line-height:35px;color:#0b57d0;transform:scaleX(1.0314);transform-origin:0 0;-webkit-text-stroke:0.55px #0b57d0;">Add</span>
<span style="left:284.90px;top:1607.85px;font-size:29px;line-height:35px;color:#444746;transform:scaleX(1.1470);transform-origin:0 0;-webkit-text-stroke:0.35px #444746;">000</span>
<span style="left:379.96px;top:1613.45px;font-size:29px;line-height:35px;color:#444746;transform:scaleX(1.0057);transform-origin:0 0;">more rows at the bottom</span>
<span style="left:2561.12px;top:1721.52px;font-size:41.5px;line-height:50px;color:#c0c2c1;transform:scaleX(0.9597);transform-origin:0 0;">Activate Windows</span>
<span style="left:2559.54px;top:1776.08px;font-size:29.5px;line-height:35px;color:#bfc1c0;transform:scaleX(0.9820);transform-origin:0 0;">Go to Settings to activate Windows.</span>
<span style="left:334.61px;top:1875.75px;font-size:29px;line-height:35px;color:#444746;transform:scaleX(1.0774);transform-origin:0 0;-webkit-text-stroke:0.5px #444746;">Register</span>
<span style="left:539.69px;top:1875.75px;font-size:29px;line-height:35px;color:#444746;transform:scaleX(1.0751);transform-origin:0 0;-webkit-text-stroke:0.5px #444746;">Confluence Status</span>
<span style="left:894.60px;top:1876.98px;font-size:24px;line-height:29px;color:#1f1f1f;-webkit-text-stroke:0.5px #1f1f1f;">4</span>
<span style="left:932.00px;top:1875.75px;font-size:29px;line-height:35px;color:#0b57d0;font-weight:700;transform:scaleX(1.0315);transform-origin:0 0;">DCT &amp; Cleansing Report</span>
<span style="left:1366.38px;top:1875.75px;font-size:29px;line-height:35px;color:#444746;transform:scaleX(1.0510);transform-origin:0 0;-webkit-text-stroke:0.5px #444746;">Transform S Curve</span>
<span style="left:1711.48px;top:1875.75px;font-size:29px;line-height:35px;color:#444746;transform:scaleX(1.0450);transform-origin:0 0;-webkit-text-stroke:0.5px #444746;">Load S Curve</span>
<span style="left:1984.56px;top:1875.75px;font-size:29px;line-height:35px;color:#444746;transform:scaleX(1.0137);transform-origin:0 0;-webkit-text-stroke:0.5px #444746;">CS S Curve</span>
<span style="left:2228.40px;top:1875.75px;font-size:29px;line-height:35px;color:#444746;transform:scaleX(1.0425);transform-origin:0 0;-webkit-text-stroke:0.5px #444746;">ADMM Build</span>
<span style="left:2483.51px;top:1875.75px;font-size:29px;line-height:35px;color:#444746;transform:scaleX(1.0546);transform-origin:0 0;-webkit-text-stroke:0.5px #444746;">CS Pivot Table</span>
<span style="left:3077.14px;top:1872.65px;font-size:29px;line-height:35px;color:#0f2a1a;transform:scaleX(1.0327);transform-origin:0 0;-webkit-text-stroke:0.5px #0f2a1a;">Count:</span>
<div style="left:663px;top:328px;width:2px;height:1244px;background:#1a6ce4;"></div>
<div style="left:1183px;top:328px;width:2px;height:1244px;background:#1a6ce4;"></div>
<div style="left:663px;top:255px;width:522px;height:74px;box-sizing:border-box;border:4px solid #1a6ce4;border-top-width:2px;"></div>
<div style="left:1175px;top:1563px;width:20px;height:20px;box-sizing:border-box;border:2px solid #fff;border-radius:10px;background:#0b57d0;"></div>
<div style="left:0px;top:0px;width:3256px;height:2px;background:#ff0000;"></div>
<div style="left:0px;top:0px;width:2px;height:1930px;background:#ff0000;"></div>
<div style="left:3254px;top:0px;width:2px;height:1930px;background:#ff0000;"></div>
<div style="left:0px;top:1928px;width:3256px;height:2px;background:#ff0000;"></div>
</body></html>
